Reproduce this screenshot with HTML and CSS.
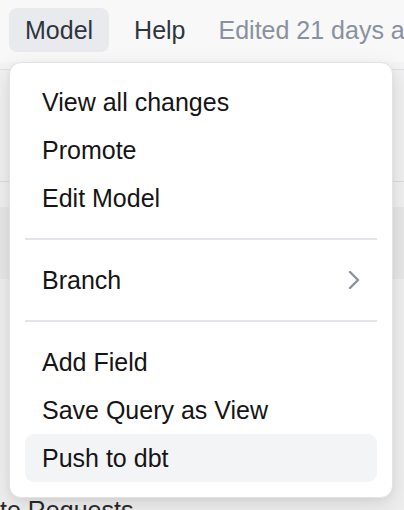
FILE: index.html
```html
<!DOCTYPE html>
<html>
<head>
<meta charset="utf-8">
<link rel="stylesheet" href="styles.css">
</head>
<body>
<div class="app">
  <header class="topbar">
    <button class="menu-btn is-open">Model</button>
    <button class="menu-btn">Help</button>
    <span class="edited">Edited 21 days ago</span>
  </header>
  <main class="page">
    <div class="band band-a"></div>
    <div class="band band-b"></div>
    <div class="band band-c"></div>
    <div class="band band-d"></div>
    <div class="band band-e"></div>
    <div class="bg-title">te Requests</div>
  </main>
  <div class="dropdown">
    <div class="item">View all changes</div>
    <div class="item">Promote</div>
    <div class="item">Edit Model</div>
    <div class="sep"></div>
    <div class="item">
      <span>Branch</span>
      <svg class="chev" width="12" height="20" viewBox="0 0 12 20"><path d="M2 2 L10 10 L2 18" fill="none" stroke="#8a919e" stroke-width="2.4" stroke-linecap="round" stroke-linejoin="round"/></svg>
    </div>
    <div class="sep"></div>
    <div class="item">Add Field</div>
    <div class="item">Save Query as View</div>
    <div class="item is-hover">Push to dbt</div>
  </div>
</div>
</body>
</html>
```
FILE: styles.css
```css
* { box-sizing: border-box; }
html, body {
  margin: 0;
  padding: 0;
  width: 404px;
  height: 510px;
  overflow: hidden;
  background: #f1f1f1;
  font-family: "Liberation Sans", Arial, sans-serif;
}
.app {
  position: relative;
  width: 404px;
  height: 510px;
  display: flex;
  flex-direction: column;
}
.topbar {
  height: 62px;
  flex: none;
  background: #f8f8f8;
  display: flex;
  align-items: flex-start;
  padding: 8px 0 0 9px;
  gap: 9px;
  white-space: nowrap;
  overflow: hidden;
}
.menu-btn {
  height: 44px;
  padding: 0 16px;
  border: none;
  border-radius: 8px;
  background: transparent;
  font-family: inherit;
  font-size: 25px;
  color: #2f3540;
  display: flex;
  align-items: center;
}
.menu-btn.is-open { background: #e9eaed; }
.edited {
  height: 44px;
  display: flex;
  align-items: center;
  font-size: 25px;
  color: #8a919e;
  margin-left: 8px;
}
.page {
  flex: 1;
  display: flex;
  flex-direction: column;
}
.band { flex: none; }
.band-a { height: 8px; background: #f4f4f4; border-bottom: 1px solid #e2dbe9; }
.band-b { height: 112px; background: #f0f0f0; border-bottom: 1px solid #dcdcdc; }
.band-c { height: 25px; background: #f0f0f0; }
.band-d { height: 72px; background: #e7e7e7; }
.band-e { flex: 1; background: #efefef; }
.bg-title {
  flex: none;
  height: 15px;
  background: #efefef;
  font-size: 25px;
  line-height: 30px;
  color: #2a2a2a;
  overflow: hidden;
}
.dropdown {
  position: absolute;
  left: 9px;
  top: 62px;
  width: 384px;
  padding: 15px;
  background: #fff;
  border: 1px solid #e3e3e6;
  border-radius: 12px;
  box-shadow: 0 8px 24px rgba(0,0,0,0.10), 0 2px 6px rgba(0,0,0,0.05);
  display: flex;
  flex-direction: column;
}
.item {
  height: 48px;
  padding: 0 18px 0 17px;
  border-radius: 9px;
  display: flex;
  align-items: center;
  justify-content: space-between;
  font-size: 25px;
  color: #151515;
  white-space: nowrap;
}
.item.is-hover { background: #f3f4f6; }
.chev { display: block; margin-right: -1px; }
.sep {
  height: 2px;
  margin: 16px 0;
  background: #e2e5ea;
}
```
